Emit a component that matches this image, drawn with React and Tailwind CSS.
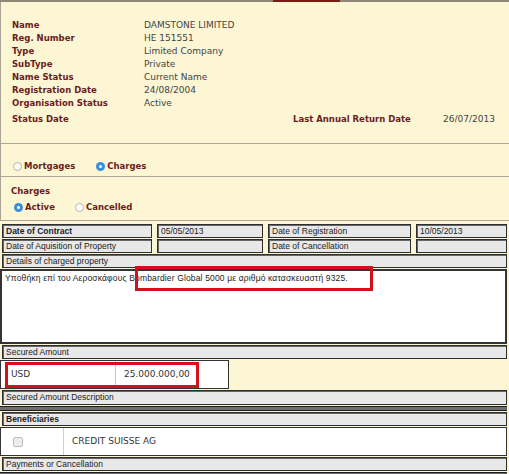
import React from 'react';

const company = [
  ['Name', 'DAMSTONE LIMITED'],
  ['Reg. Number', 'HE 151551'],
  ['Type', 'Limited Company'],
  ['SubType', 'Private'],
  ['Name Status', 'Current Name'],
  ['Registration Date', '24/08/2004'],
  ['Organisation Status', 'Active'],
];

function Radio({ checked, label }) {
  return (
    <label className="flex items-center gap-[2px]">
      {checked ? (
        <span className="w-[9px] h-[9px] rounded-full bg-[#3b8de0] flex items-center justify-center">
          <span className="w-[3px] h-[3px] rounded-full bg-white" />
        </span>
      ) : (
        <span className="w-[9px] h-[9px] rounded-full bg-white border border-[#b8b4a6]" />
      )}
      <span className="font-bold text-[#6b1c1c]">{label}</span>
    </label>
  );
}

function Cell({ className = '', children }) {
  return (
    <div className={`h-[14px] bg-[#e8e8e8] border border-[#2e2e2e] shadow-[inset_1px_1px_0_#666] pl-[3px] leading-[12px] text-[#222] whitespace-nowrap overflow-hidden ${className}`}>
      {children}
    </div>
  );
}

export default function App() {
  return (
    <div className="w-[509px] h-[474px] bg-[#fcf6d5] overflow-hidden font-['DejaVu_Sans',Verdana,sans-serif] text-[8.5px]">
      {/* top rule with the active tab marker */}
      <div className="flex h-[2px]">
        <div className="w-[273px] bg-[#8d8877]" />
        <div className="w-[67px] bg-[#7a1e14]" />
        <div className="flex-1 bg-[#8d8877]" />
      </div>

      {/* company details */}
      <div className="h-[142px] border-b border-l border-[#aaa594] pt-[17px] pl-[11px]">
        {company.map(([label, value]) => (
          <div key={label} className="grid grid-cols-[132px_1fr] leading-[13px]">
            <span className="font-bold text-[#6b1c1c]">{label}</span>
            <span className="text-[9px] text-[#444]">{value}</span>
          </div>
        ))}
        <div className="grid grid-cols-[132px_149px_150px_1fr] leading-[13px] mt-[3px]">
          <span className="font-bold text-[#6b1c1c]">Status Date</span>
          <span />
          <span className="font-bold text-[#6b1c1c]">Last Annual Return Date</span>
          <span className="text-[9px] text-[#444]">26/07/2013</span>
        </div>
      </div>

      {/* mortgages / charges switch */}
      <div className="h-[33px] border-b border-l border-[#aaa594] pt-[12px] pl-[12px] flex gap-[21px] leading-[13px]">
        <Radio label="Mortgages" />
        <Radio checked label="Charges" />
      </div>

      <div className="h-[44px] border-b border-l border-[#aaa594] pt-[8px] pl-[10px] leading-[13px]">
        <div className="font-bold text-[#6b1c1c]">Charges</div>
        <div className="flex gap-[20px] mt-[3px] pl-[3px]">
          <Radio checked label="Active" />
          <Radio label="Cancelled" />
        </div>
      </div>

      {/* charge record */}
      <div className="pt-[3px] pl-[2px] pr-[2px] flex flex-col font-['Liberation_Sans',Arial,sans-serif] text-[8.5px]">
        <div className="flex gap-[5px]">
          <Cell className="w-[150px] font-bold">Date of Contract</Cell>
          <Cell className="w-[106px]">05/05/2013</Cell>
          <Cell className="w-[143px]">Date of Registration</Cell>
          <Cell className="flex-1">10/05/2013</Cell>
        </div>
        <div className="flex gap-[5px] mt-[1px]">
          <Cell className="w-[150px]">Date of Aquisition of Property</Cell>
          <Cell className="w-[106px]" />
          <Cell className="w-[143px]">Date of Cancellation</Cell>
          <Cell className="flex-1" />
        </div>
        <Cell className="mt-[1px]">Details of charged property</Cell>

        <div className="relative -ml-[2px] mt-[1px] h-[75px] bg-white border-2 border-[#333] px-[3px] leading-[14px] text-[#222] tracking-[0.15px]">
          Υποθήκη επί του Αεροσκάφους Bombardier Global 5000 με αριθμό κατασκευαστή 9325.
          <div className="absolute left-[133px] -top-[5px] w-[238px] h-[25px] border-[3px] border-[#d3111b]" />
        </div>

        <Cell className="mt-[1px]">Secured Amount</Cell>

        <div className="relative -ml-[2px] mt-[1px] w-[229px] h-[29px] bg-white border border-[#333] flex items-center font-['DejaVu_Sans',Verdana,sans-serif] text-[9px] text-[#333]">
          <span className="w-[115px] pl-[10px] h-full flex items-center border-r border-[#c9c9c9]">USD</span>
          <span className="pl-[8px]">25.000.000,00</span>
          <div className="absolute left-[4px] top-[1px] w-[194px] h-[26px] border-[3px] border-[#d3111b]" />
        </div>

        <Cell className="mt-[1px] h-[15px]">Secured Amount Description</Cell>
        <div className="-ml-[2px] h-[5px] mt-[1px] border-y border-[#1e1e1e] bg-[#6e6e6e]" />

        <Cell className="mt-[1px] font-bold text-[#6b1c1c]">Beneficiaries</Cell>
        <div className="-ml-[2px] mt-[1px] h-[29px] bg-white border border-[#333] flex font-['DejaVu_Sans',Verdana,sans-serif] text-[9px] text-[#333]">
          <div className="w-[63px] border-r border-[#cfcfcf] flex items-center pl-[12px]">
            <span className="w-[10px] h-[10px] bg-[#ececec] border border-[#bdbdbd] rounded-[2px]" />
          </div>
          <div className="flex items-center pl-[8px]">CREDIT SUISSE AG</div>
        </div>

        <Cell className="mt-[1px]">Payments or Cancellation</Cell>
        <div className="-ml-[2px] h-[5px] mt-[1px] border-y border-[#1e1e1e] bg-[#6e6e6e]" />
      </div>
    </div>
  );
}
